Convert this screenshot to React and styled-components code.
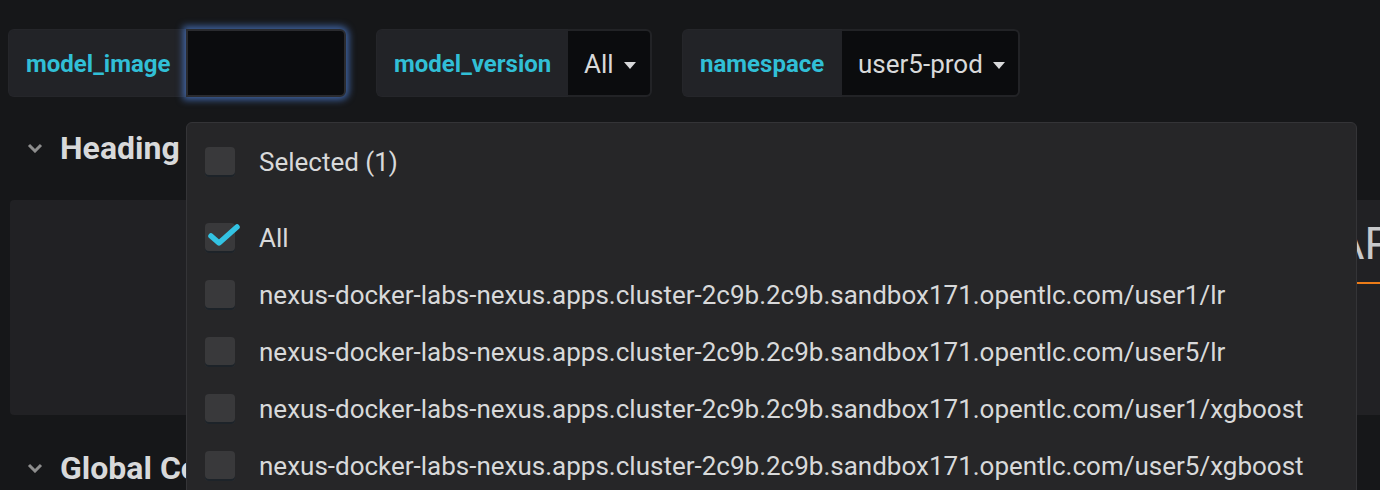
import React from 'react'
import styled, { createGlobalStyle } from 'styled-components'

const GlobalStyle = createGlobalStyle`
    html, body {
        margin: 0;
        padding: 0;
        background: #161719;
        overflow: hidden;
        font-family: Roboto, "Liberation Sans", sans-serif;
    }
`

const Page = styled.div`
    position: relative;
    width: 1380px;
    height: 490px;
    padding: 29px 0 0 8px;
    box-sizing: border-box;
    overflow: hidden;
`

const Toolbar = styled.div`
    display: flex;
    gap: 30px;
    height: 68px;
`

const VarGroup = styled.div`
    display: flex;
    height: 68px;
`

const VarLabel = styled.div`
    display: flex;
    align-items: center;
    width: ${p => p.width}px;
    padding: 2px 0 0 17px;
    box-sizing: border-box;
    background: #222327;
    border: 1px solid #25262a;
    border-right: none;
    border-radius: 6px 0 0 6px;
    color: #31bfd6;
    font-weight: 700;
    font-size: 24px;
    white-space: nowrap;
`

const VarInput = styled.div`
    width: 160px;
    box-sizing: border-box;
    background: #0b0c0e;
    border: 2px solid #2a2b2f;
    border-radius: 0 6px 6px 0;
    box-shadow: 0 0 7px 3px rgba(78, 128, 214, 0.7);
`

const VarValue = styled.div`
    display: flex;
    align-items: center;
    gap: 10px;
    width: ${p => p.width}px;
    padding: 2px 0 0 16px;
    box-sizing: border-box;
    background: #0b0c0e;
    border: 2px solid #222326;
    border-left: none;
    border-radius: 0 6px 6px 0;
    color: #d8d9da;
    font-size: 26px;
    white-space: nowrap;
`

const Caret = styled.span`
    width: 0;
    height: 0;
    border-left: 6px solid transparent;
    border-right: 6px solid transparent;
    border-top: 7px solid #d8d9da;
    margin-top: 2px;
`

const RowHeader = styled.div`
    display: flex;
    align-items: center;
    gap: 17px;
    height: 46px;
    margin-top: ${p => p.top}px;
    padding-left: 19px;
    color: #d8d9da;
    font-size: 32px;
    font-weight: 700;
    white-space: nowrap;
`

const Panel = styled.div`
    display: flex;
    height: 215px;
    margin: 29px 0 0 2px;
    width: 1500px;
    background: #212124;
    border-radius: 4px;
    overflow: hidden;
    white-space: nowrap;
`

const PanelTitle = styled.div`
    margin: 18px 0 0 1287px;
    padding-bottom: 12px;
    height: fit-content;
    font-size: 44px;
    color: #c8c9cb;
    border-bottom: 2px solid #eb7b18;
    line-height: 52px;
`

const Dropdown = styled.div`
    position: absolute;
    left: 186px;
    top: 122px;
    width: 1171px;
    height: 400px;
    box-sizing: border-box;
    padding-top: 10px;
    background: #262628;
    border: 1px solid #343437;
    border-radius: 6px;
`

const Option = styled.div`
    display: flex;
    align-items: center;
    gap: 24px;
    height: 57px;
    padding-left: 18px;
    margin-bottom: ${p => (p.spaced ? 19 : 0)}px;
    color: #d8d9da;
    font-size: 26px;
    white-space: nowrap;
`

const Check = styled.span`
    position: relative;
    width: 30px;
    height: 30px;
    border-radius: 4px;
    background: #39393b;
    box-shadow: inset 0 -2px 0 #1d2329;
    flex-shrink: 0;
`

const Tick = styled.svg`
    position: absolute;
    left: 1px;
    top: -4px;
`

const Chevron = () => (
    <svg width="16" height="10" viewBox="0 0 16 10">
        <polyline points="2,2 8,8 14,2" fill="none" stroke="#8e8e8e" strokeWidth="3" />
    </svg>
)

const CheckBox = ({ checked }) => (
    <Check>
        {checked && (
            <Tick width="36" height="30" viewBox="0 0 36 30">
                <polyline points="5,17 13,24 31,8" fill="none" stroke="#33c3e3"
                    strokeWidth="5.5" strokeLinecap="round" strokeLinejoin="round" />
            </Tick>
        )}
    </Check>
)

const host = 'nexus-docker-labs-nexus.apps.cluster-2c9b.2c9b.sandbox171.opentlc.com'
const images = ['user1/lr', 'user5/lr', 'user1/xgboost', 'user5/xgboost']

export default function App() {
    return (
        <>
            <GlobalStyle />
            <Page>
                <Toolbar>
                    <VarGroup>
                        <VarLabel width={178}>model_image</VarLabel>
                        <VarInput />
                    </VarGroup>
                    <VarGroup>
                        <VarLabel width={192}>model_version</VarLabel>
                        <VarValue width={84}>All <Caret /></VarValue>
                    </VarGroup>
                    <VarGroup>
                        <VarLabel width={160}>namespace</VarLabel>
                        <VarValue width={178}>user5-prod <Caret /></VarValue>
                    </VarGroup>
                </Toolbar>

                <RowHeader top={28}><Chevron />Heading</RowHeader>

                <Panel>
                    <PanelTitle>MAPE</PanelTitle>
                </Panel>

                <RowHeader top={30}><Chevron />Global Configuration</RowHeader>

                {/* variable options menu */}
                <Dropdown>
                    <Option spaced><CheckBox />Selected (1)</Option>
                    <Option><CheckBox checked />All</Option>
                    {images.map(img => (
                        <Option key={img}><CheckBox />{host}/{img}</Option>
                    ))}
                </Dropdown>
            </Page>
        </>
    )
}
